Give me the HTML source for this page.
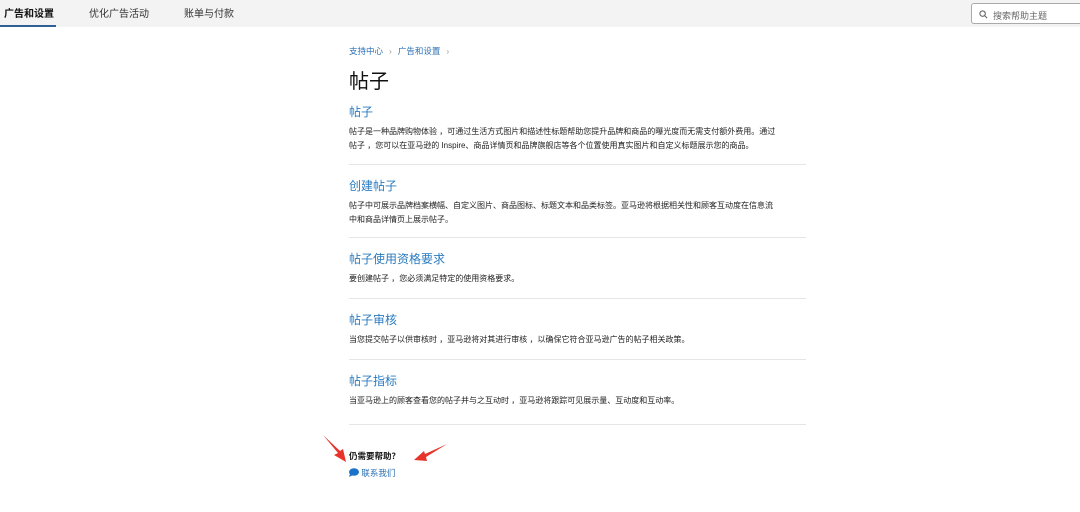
<!DOCTYPE html>
<html><head><meta charset="utf-8"><style>
*{margin:0;padding:0;box-sizing:border-box}
body{width:1080px;height:512px;background:#fff;font-family:"Liberation Sans","Noto Sans CJK SC",sans-serif;position:relative;overflow:hidden;color:#111}
.top{position:absolute;left:0;top:0;width:1080px;height:27px;background:#f3f3f3}
.tab{position:absolute;top:5px;font-size:10px;color:#333}
.ul{position:absolute;left:0;top:25px;width:56px;height:2px;background:#2e5f96}
.search{position:absolute;left:971px;top:3px;width:115px;height:21px;border:1px solid #aaa;border-radius:3px;background:#fff;font-size:9px;color:#666;padding:5px 0 0 21px}
.abs{position:absolute;left:349px}
.bc{top:45px;font-size:8.5px;color:#2a6fb3}
.bc span{color:#999;margin:0 6px}
h1{position:absolute;left:349px;top:65px;font-size:20px;font-weight:normal;color:#111}
.h{font-size:12px;color:#2a7bc0}
.p{font-size:8px;color:#222;line-height:14px;white-space:nowrap}
.hr{height:1px;width:457px;background:#e6e6e6}
</style></head><body>
<div class="top">
<div class="tab" style="left:4px;font-weight:bold;color:#111">广告和设置</div>
<div class="tab" style="left:89px">优化广告活动</div>
<div class="tab" style="left:184px">账单与付款</div>
<div class="ul"></div>
<div class="search"><svg style="position:absolute;left:7px;top:6px" width="9" height="9" viewBox="0 0 10 10"><circle cx="4" cy="4" r="3" fill="none" stroke="#666" stroke-width="1.2"/><path d="M6.3 6.3L9 9" stroke="#666" stroke-width="1.2"/></svg>搜索帮助主题</div>
</div>
<div class="abs bc">支持中心<span>›</span>广告和设置<span>›</span></div>
<h1>帖子</h1>
<div class="abs h" style="top:103px">帖子</div>
<div class="abs p" style="top:125px">帖子是一种品牌购物体验 ，可通过生活方式图片和描述性标题帮助您提升品牌和商品的曝光度而无需支付额外费用。通过<br>帖子 ，您可以在亚马逊的 Inspire、商品详情页和品牌旗舰店等各个位置使用真实图片和自定义标题展示您的商品。</div>
<div class="abs hr" style="top:164px"></div>
<div class="abs h" style="top:177px">创建帖子</div>
<div class="abs p" style="top:199px">帖子中可展示品牌档案横幅、自定义图片、商品图标、标题文本和品类标签。亚马逊将根据相关性和顾客互动度在信息流<br>中和商品详情页上展示帖子。</div>
<div class="abs hr" style="top:237px"></div>
<div class="abs h" style="top:250px">帖子使用资格要求</div>
<div class="abs p" style="top:272px">要创建帖子 ，您必须满足特定的使用资格要求。</div>
<div class="abs hr" style="top:298px"></div>
<div class="abs h" style="top:311px">帖子审核</div>
<div class="abs p" style="top:333px">当您提交帖子以供审核时 ，亚马逊将对其进行审核 ，以确保它符合亚马逊广告的帖子相关政策。</div>
<div class="abs hr" style="top:359px"></div>
<div class="abs h" style="top:372px">帖子指标</div>
<div class="abs p" style="top:394px">当亚马逊上的顾客查看您的帖子并与之互动时 ，亚马逊将跟踪可见展示量、互动度和互动率。</div>
<div class="abs hr" style="top:424px"></div>
<div class="abs" style="top:450px;font-size:8.5px;font-weight:bold">仍需要帮助？</div>
<div class="abs" style="top:467px;font-size:8.5px;color:#2a6fb3"><svg width="10" height="9" viewBox="0 0 10 9" style="vertical-align:-1px"><ellipse cx="5" cy="4" rx="5" ry="3.8" fill="#1a73c8"/><path d="M1 6L0 9L4 7Z" fill="#1a73c8"/></svg> 联系我们</div>
<svg style="position:absolute;left:0;top:0" width="1080" height="512">
<path d="M323 435L338 453L334 455L346 462L343 449L340 451Z" fill="#e8332a"/>
<path d="M447 444L425 454L424 451L414 460L427 461L426 457Z" fill="#e8332a"/>
</svg>
</body></html>
